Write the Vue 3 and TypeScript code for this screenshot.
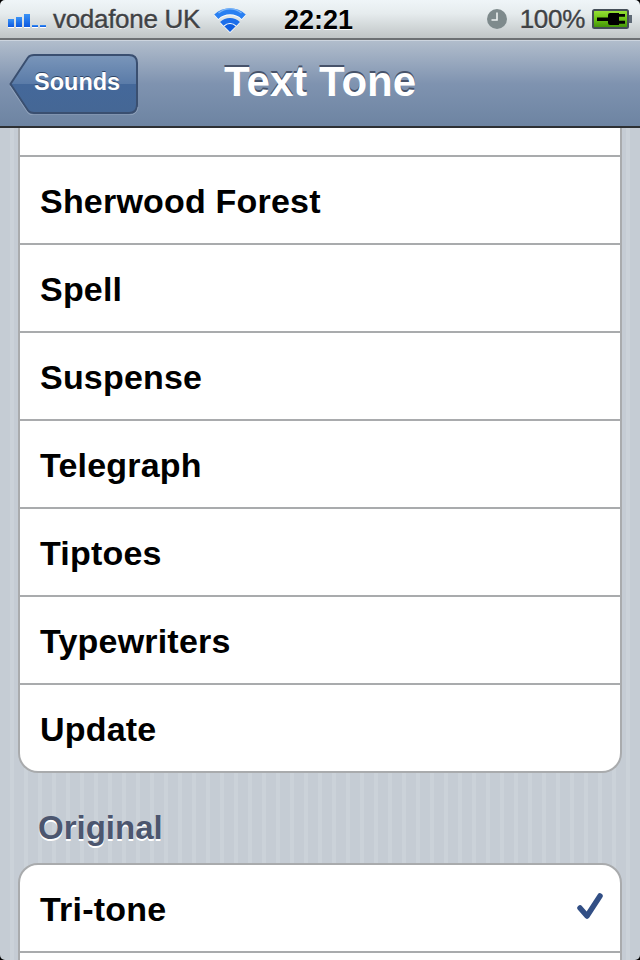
<template>
  <div class="phone">
    <div class="status-bar">
      <div class="signal">
        <i v-for="(h, idx) in bars" :key="idx" :style="{ height: h + 'px' }"></i>
      </div>
      <span class="carrier">vodafone UK</span>
      <svg class="wifi" width="32" height="26" viewBox="0 0 32 26">
        <path d="M16 25 L10.500 19.500 A7.500 7.500 0 0 1 21.500 19.500 Z" fill="#0f5ee0" />
        <path d="M7.800 16.800 A12 12 0 0 1 24.200 16.800" fill="none" stroke="#1c6eea" stroke-width="5" />
        <path d="M2.300 9.800 A20 20 0 0 1 29.700 9.800" fill="none" stroke="#2a80f2" stroke-width="6" />
        <path d="M4.500 6 A18 18 0 0 1 27.500 6" fill="none" stroke="#7db6f8" stroke-width="1.400" />
      </svg>
      <span class="time">22:21</span>
      <div class="status-right">
        <svg class="clock" width="20" height="20" viewBox="0 0 20 20">
          <circle cx="10" cy="10" r="10" fill="#7e8a8c" />
          <path d="M10 3.500v7.500H4.500" stroke="#eef2f2" stroke-width="1.600" fill="none" />
        </svg>
        <span class="battery-text">100%</span>
        <svg class="battery" width="40" height="20" viewBox="0 0 40 20">
          <defs>
            <linearGradient id="charge" x1="0" y1="0" x2="0" y2="1">
              <stop offset="0" stop-color="#9be23a" />
              <stop offset="0.5" stop-color="#6cc414" />
              <stop offset="1" stop-color="#3f8f08" />
            </linearGradient>
          </defs>
          <rect x="1" y="1" width="35" height="18" rx="1.500" fill="url(#charge)" stroke="#444e58" stroke-width="2" />
          <rect x="37" y="6" width="3" height="8" fill="#5f6a76" />
          <path d="M5 8.500h11V6q0-2 2-2h9v1h6v2.700h-6v4h6v3h-6v1.300h-9q-2 0-2-2v-2H5z" fill="#000" />
        </svg>
      </div>
    </div>
    <div class="nav-bar">
      <button class="back">
        <svg class="back-shape" width="130" height="62" viewBox="0 0 130 62">
          <defs>
            <linearGradient id="backFill" x1="0" y1="0" x2="0" y2="1">
              <stop offset="0" stop-color="#7a96ba" />
              <stop offset="0.5" stop-color="#5a7ba8" />
              <stop offset="0.5" stop-color="#44689a" />
              <stop offset="1" stop-color="#456795" />
            </linearGradient>
          </defs>
          <path d="M1.500 31 L19 4.500 Q21 2 25 2 H120 Q128 2 128 10 V52 Q128 60 120 60 H25 Q21 60 19 57.500 Z" fill="url(#backFill)" stroke="#3a4f70" stroke-width="2" />
          <path d="M1 33 L19 60 Q21 62 25 62 H120 Q128 62 129 54" fill="none" stroke="#a3b3c8" stroke-opacity="0.6" stroke-width="1" />
        </svg>
        <span>Sounds</span>
      </button>
      <h1>Text Tone</h1>
    </div>
    <div class="content">
      <ul class="group cut">
        <li class="stub"></li>
        <li v-for="name in tones" :key="name">{{ name }}</li>
      </ul>
      <h2>Original</h2>
      <ul class="group">
        <li>
          Tri-tone
          <svg class="check" width="28" height="30" viewBox="0 0 28 30">
            <path d="M4 17 L11 25 L24 5" fill="none" stroke="#324f85" stroke-width="5.500" stroke-linecap="round" stroke-linejoin="round" />
          </svg>
        </li>
        <li></li>
      </ul>
    </div>
  </div>
</template>

<script setup lang="ts">
const bars = [8, 10, 13, 2, 2]
const tones = ['Sherwood Forest', 'Spell', 'Suspense', 'Telegraph', 'Tiptoes', 'Typewriters', 'Update']
</script>

<style>
body { background: #c5ccd4; }
</style>

<style scoped>
.phone {
  width: 640px;
  height: 960px;
  position: relative;
  overflow: hidden;
  display: flex;
  flex-direction: column;
  font-family: "Liberation Sans", Arial, sans-serif;
}

/* tiny rounded screen corners */
.phone::after {
  content: "";
  position: absolute;
  inset: 0;
  border-radius: 5px;
  box-shadow: 0 0 0 5px #000;
  pointer-events: none;
}

.status-bar {
  height: 40px;
  flex: none;
  box-sizing: border-box;
  display: flex;
  align-items: center;
  padding: 0 8px;
  position: relative;
  background: linear-gradient(#eff5f8, #e6ecee 35%, #c0c5c6);
  border-bottom: 2px solid #6d7073;
  color: #3f4245;
  text-shadow: 0 1px 0 #fff;
}

.signal { display: flex; align-items: flex-end; gap: 2px; height: 13px; margin-top: 2px; width: 38px; }
.signal i { width: 6px; background: linear-gradient(#3b93f5, #0c58e0); display: block; flex: none; box-shadow: 0 1px 0 #fff; }

.carrier { margin-left: 7px; font-size: 26px; letter-spacing: -0.3px; -webkit-text-stroke: 0.4px #3f4245; }
.wifi { margin-left: 14px; margin-top: 1px; filter: drop-shadow(0 1px 0 #fff); }
.time {
  position: absolute;
  left: 284px;
  top: 5px;
  font-size: 27px;
  line-height: 30px;
  font-weight: bold;
  color: #000;
}

.status-right { margin-left: auto; display: flex; align-items: center; }
.clock { margin-right: 13px; }
.battery-text { font-size: 26px; letter-spacing: -0.3px; margin-right: 7px; -webkit-text-stroke: 0.4px #3f4245; }

.nav-bar {
  height: 88px;
  flex: none;
  box-sizing: border-box;
  position: relative;
  display: flex;
  align-items: center;
  background: linear-gradient(#b1bdcc, #7f93b0 50%, #6d84a2);
  border-top: 1px solid #cdd5df;
  border-bottom: 2px solid #2d3033;
}

.back {
  margin-left: 9px;
  width: 130px;
  height: 62px;
  position: relative;
  box-sizing: border-box;
  padding: 0 0 2px 25px;
  border: none;
  background: none;
  text-align: left;
  font: bold 23.5px "Liberation Sans", Arial, sans-serif;
  color: #fff;
  text-shadow: 0 -1px 0 #2f4566;
}

.back span { position: relative; }
.back-shape { position: absolute; left: 0; top: 0; }

.nav-bar h1 {
  position: absolute;
  left: 224px;
  top: 18px;
  margin: 0;
  font-size: 42px;
  line-height: 46px;
  font-weight: bold;
  color: #fff;
  text-shadow: 0 -2px 0 #47536a;
}

.content {
  flex: 1;
  min-height: 0;
  overflow: hidden;
  padding: 0 18px;
  background: repeating-linear-gradient(90deg, #c5ccd4 0 10px, #cbd2d9 10px 14px);
}

.group {
  list-style: none;
  margin: 0;
  padding: 0;
  background: #fff;
  border: 2px solid #a9abad;
  border-radius: 20px;
  overflow: hidden;
}

.group.cut { border-top: none; border-radius: 0 0 20px 20px; }

.group li {
  height: 84px;
  box-sizing: content-box;
  display: flex;
  align-items: center;
  justify-content: space-between;
  padding: 2px 16px 0 20px;
  font-size: 34px;
  letter-spacing: 0.2px;
  font-weight: bold;
  color: #000;
  border-bottom: 2px solid #a9abad;
}

.group li:last-child { border-bottom: none; }
.group li.stub { height: 25px; }

.check { margin-bottom: 6px; }

.content h2 {
  margin: 0;
  padding: 35px 0 15px 20px;
  font-size: 33px;
  line-height: 40px;
  font-weight: bold;
  color: #4c566f;
  text-shadow: 0 2px 0 #fff;
}
</style>
